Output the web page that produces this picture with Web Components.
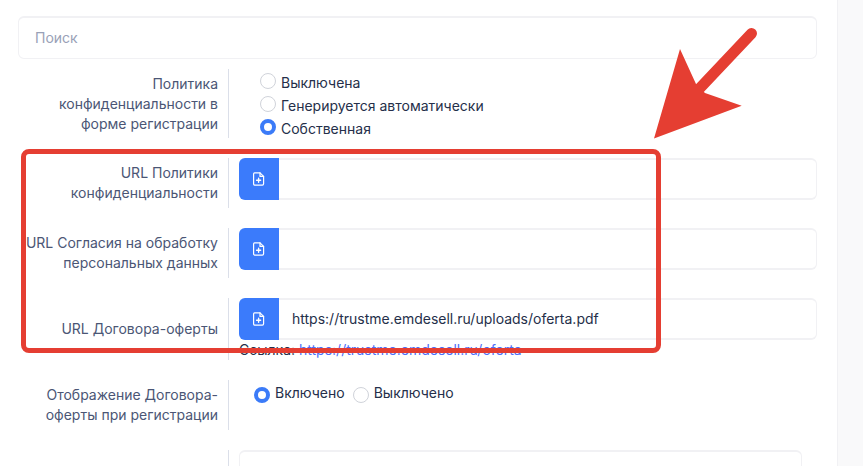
<!DOCTYPE html>
<html lang="ru">
<head>
<meta charset="utf-8">
<title>Настройки</title>
<style>
  html, body { margin: 0; height: 466px; overflow: hidden; background: #f9f9fa; }
  body { font-family: Inter, "Liberation Sans", sans-serif; font-size: 14px; line-height: 20px; color: #252f4a; position: relative; }
</style>
</head>
<body>
<settings-card>
  <search-box placeholder="Поиск"></search-box>

  <form-row label="Политика конфиденциальности в форме регистрации" gap="20" width="160">
    <div style="display:flex;flex-direction:column;gap:3px;padding:3px 0 0 21px">
      <radio-option>Выключена</radio-option>
      <radio-option>Генерируется автоматически</radio-option>
      <radio-option checked>Собственная</radio-option>
    </div>
  </form-row>

  <form-row label="URL Политики конфиденциальности" gap="20" height="50">
    <file-input></file-input>
  </form-row>

  <form-row label="URL Согласия на обработку персональных данных" gap="20" height="50">
    <file-input></file-input>
  </form-row>

  <form-row label="URL Договора-оферты" label-top="21" gap="20">
    <file-input value="https://trustme.emdesell.ru/uploads/oferta.pdf"></file-input>
    <link-note href="#">https://trustme.emdesell.ru/oferta</link-note>
  </form-row>

  <form-row label="Отображение Договора-оферты при регистрации" gap="20" height="50">
    <div style="display:flex;padding:4px 0 0 15px">
      <radio-option checked inline style="margin-right:8px">Включено</radio-option>
      <radio-option inline>Выключено</radio-option>
    </div>
  </form-row>

  <form-row label="" height="60">
    <text-box></text-box>
  </form-row>
</settings-card>
<mark-overlay></mark-overlay>

<script>
class SettingsCard extends HTMLElement {
  connectedCallback() {
    this.attachShadow({ mode: "open" });
    this.shadowRoot.innerHTML = `
      <style>
        :host {
          display: block;
          box-sizing: border-box;
          width: 863px;
          height: 500px;
          margin-top: -20px;
          padding-right: 25px;
        }
        .card {
          box-sizing: border-box;
          height: 100%;
          background: #fff;
          border-right: 1px solid #f1f1f4;
          border-radius: 0 12px 0 0;
          padding: 36px 20px 0 18px;
        }
      </style>
      <div class="card"><slot></slot></div>
    `;
  }
}
customElements.define("settings-card", SettingsCard);

class SearchBox extends HTMLElement {
  connectedCallback() {
    this.attachShadow({ mode: "open" });
    this.shadowRoot.innerHTML = `
      <style>
        :host { display: block; margin-bottom: 10px; }
        .box {
          box-sizing: border-box;
          height: 43px;
          padding: 0 16px;
          display: flex;
          align-items: center;
          background: #fff;
          border: 1px solid #f1f1f4;
          border-top-width: 2px;
          border-radius: 6px;
          color: #99a1b7;
          font-size: 14px;
        }
      </style>
      <div class="box">${this.getAttribute("placeholder")}</div>
    `;
  }
}
customElements.define("search-box", SearchBox);

class FormRow extends HTMLElement {
  connectedCallback() {
    this.attachShadow({ mode: "open" });
    const top = this.getAttribute("label-top") || 5;
    const gap = this.getAttribute("gap") || 0;
    const height = this.getAttribute("height");
    this.shadowRoot.innerHTML = `
      <style>
        :host { display: block; margin-bottom: ${gap}px; }
        .row { display: grid; grid-template-columns: 210px 1fr; ${height ? "min-height:" + height + "px;" : ""} }
        .label {
          box-sizing: border-box;
          padding: ${top}px 10px 0 0;
          text-align: right;
          color: #4b5675;
          font-size: 14px;
          line-height: 20px;
        }
        .label span { display: block; margin-left: 6px; }
        .field {
          border-left: 1px solid #dbdfe9;
          padding-left: 10px;
          min-width: 0;
        }
      </style>
      <div class="row">
        <div class="label"><span>${this.getAttribute("label")}</span></div>
        <div class="field"><slot></slot></div>
      </div>
    `;
  }
}
customElements.define("form-row", FormRow);

class RadioOption extends HTMLElement {
  connectedCallback() {
    this.attachShadow({ mode: "open" });
    const checked = this.hasAttribute("checked");
    this.shadowRoot.innerHTML = `
      <style>
        :host { display: block; color: #252f4a; font-size: 14px; line-height: 20px; }
        .opt { display: flex; align-items: center; gap: 5px; height: 20px; }
        .dot {
          flex: none;
          box-sizing: border-box;
          width: 16px;
          height: 16px;
          border-radius: 50%;
          background: #fff;
          border: ${checked ? "4px solid #3b7bf8" : "1px solid #d0d3da"};
          position: relative;
          top: ${this.hasAttribute("inline") ? 1 : -1}px;
        }
        .txt { position: relative; top: ${this.hasAttribute("inline") ? -1 : 1}px; }
      </style>
      <div class="opt"><span class="dot"></span><span class="txt"><slot></slot></span></div>
    `;
  }
}
customElements.define("radio-option", RadioOption);

class FileInput extends HTMLElement {
  connectedCallback() {
    this.attachShadow({ mode: "open" });
    this.shadowRoot.innerHTML = `
      <style>
        :host { display: block; }
        .group { display: flex; height: 42px; }
        .btn {
          flex: none;
          width: 40px;
          display: flex;
          align-items: center;
          justify-content: center;
          background: #3b7bfb;
          border-radius: 6px 0 0 6px;
        }
        .val {
          flex: 1;
          box-sizing: border-box;
          display: flex;
          align-items: center;
          padding: 0 13px;
          border: 1px solid #f1f1f4;
          border-top-width: 2px;
          border-bottom-width: 2px;
          border-left: 0;
          border-radius: 0 6px 6px 0;
          color: #252f4a;
          font-size: 14px;
        }
      </style>
      <div class="group">
        <div class="btn">
          <svg width="12" height="14" viewBox="0 0 12 14" fill="none" stroke="#fff" stroke-width="1.2" stroke-linejoin="round" stroke-linecap="round">
            <path d="M1.6.8h5.4l3.6 3.6v7.4a1.3 1.3 0 0 1-1.3 1.3H1.6A1.3 1.3 0 0 1 .6 11.8V2A1.2 1.2 0 0 1 1.6.8z"/>
            <path d="M7 .8v3.6h3.6"/>
            <path d="M5.6 6.2v4M3.6 8.2h4" stroke-width="1.4"/>
          </svg>
        </div>
        <div class="val">${this.getAttribute("value") || ""}</div>
      </div>
    `;
  }
}
customElements.define("file-input", FileInput);

class LinkNote extends HTMLElement {
  connectedCallback() {
    this.attachShadow({ mode: "open" });
    this.shadowRoot.innerHTML = `
      <style>
        :host { display: block; height: 20px; font-size: 14px; line-height: 20px; color: #252f4a; }
        a { color: #4f6ef7; text-decoration: none; }
      </style>
      Ссылка: <a href="${this.getAttribute("href")}"><slot></slot></a>
    `;
  }
}
customElements.define("link-note", LinkNote);

class TextBox extends HTMLElement {
  connectedCallback() {
    this.attachShadow({ mode: "open" });
    this.shadowRoot.innerHTML = `
      <style>
        :host { display: block; margin-right: 15px; }
        .box {
          box-sizing: border-box;
          height: 60px;
          border: 1px solid #f1f1f4;
          border-top-width: 2px;
          border-radius: 6px;
        }
      </style>
      <div class="box"></div>
    `;
  }
}
customElements.define("text-box", TextBox);

// red annotation drawn over the form
class MarkOverlay extends HTMLElement {
  connectedCallback() {
    this.attachShadow({ mode: "open" });
    this.shadowRoot.innerHTML = `
      <style>
        :host { position: absolute; inset: 0; display: block; pointer-events: none; }
        .frame {
          position: absolute;
          left: 21px;
          top: 149px;
          width: 640px;
          height: 204px;
          box-sizing: border-box;
          border: 5px solid #e53e32;
          border-radius: 8px;
        }
        svg { position: absolute; left: 0; top: 0; }
      </style>
      <div class="frame"></div>
      <svg width="863" height="466" viewBox="0 0 863 466">
        <path d="M751.5 33.5L700 88" stroke="#e53e32" stroke-width="11" stroke-linecap="round" fill="none"/>
        <path d="M680 49L696 84L705 93L741.7 105.7L654 138.5z" fill="#e53e32"/>
      </svg>
    `;
  }
}
customElements.define("mark-overlay", MarkOverlay);
</script>
</body>
</html>
